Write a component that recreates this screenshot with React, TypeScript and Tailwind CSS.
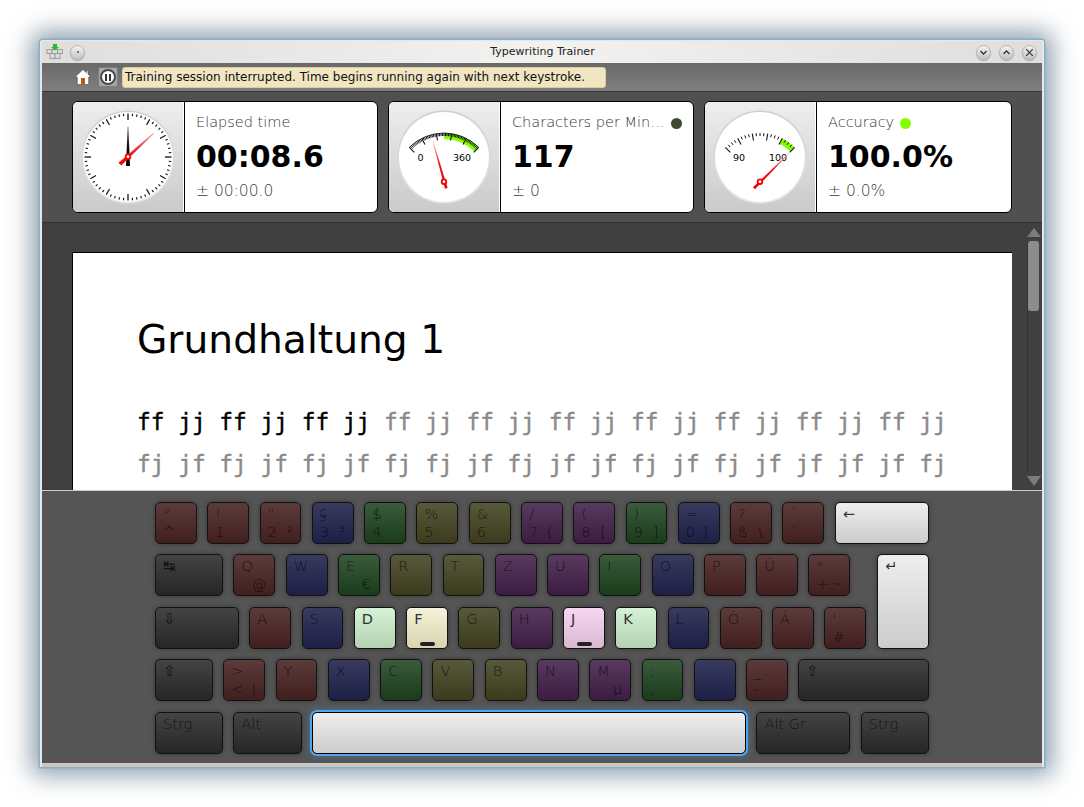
import React from "react";

type KeyDef = {
  top?: string;
  bottom?: string;
  right?: string;
  tone: string;
  width?: string;
  bump?: boolean;
};

const RED = "bg-gradient-to-b from-[#5c3b3b] to-[#421f1f]";
const BLUE = "bg-gradient-to-b from-[#383b5e] to-[#1d1f45]";
const GREEN = "bg-gradient-to-b from-[#3a5c3c] to-[#1a3c1a]";
const OLIVE = "bg-gradient-to-b from-[#58583b] to-[#3c3c1c]";
const PURPLE = "bg-gradient-to-b from-[#583b5e] to-[#3c1c42]";
const DARK = "bg-gradient-to-b from-[#444444] to-[#262626]";
const WHITE = "bg-gradient-to-b from-[#eeeeee] to-[#cccccc] !text-[#333333] !font-normal";
const HL_GREEN = "bg-gradient-to-b from-[#d6f2d6] to-[#b4d2b0] !text-[#333333] !font-normal";
const HL_YELLOW = "bg-gradient-to-b from-[#f4f2da] to-[#d8d4ae] !text-[#333333] !font-normal";
const HL_PURPLE = "bg-gradient-to-b from-[#f6d6f2] to-[#dab8d4] !text-[#333333] !font-normal";

const row1: KeyDef[] = [
  { top: "°", bottom: "^", tone: RED },
  { top: "!", bottom: "1", tone: RED },
  { top: '"', bottom: "2", right: "²", tone: RED },
  { top: "§", bottom: "3", right: "³", tone: BLUE },
  { top: "$", bottom: "4", tone: GREEN },
  { top: "%", bottom: "5", tone: OLIVE },
  { top: "&", bottom: "6", tone: OLIVE },
  { top: "/", bottom: "7", right: "{", tone: PURPLE },
  { top: "(", bottom: "8", right: "[", tone: PURPLE },
  { top: ")", bottom: "9", right: "]", tone: GREEN },
  { top: "=", bottom: "0", right: "}", tone: BLUE },
  { top: "?", bottom: "ß", right: "\\", tone: RED },
  { top: "`", bottom: "´", tone: RED },
  { top: "←", tone: WHITE, width: "w-[94px]" },
];

const row2: KeyDef[] = [
  { top: "↹", tone: DARK, width: "w-[68px]" },
  { top: "Q", right: "@", tone: RED },
  { top: "W", tone: BLUE },
  { top: "E", right: "€", tone: GREEN },
  { top: "R", tone: OLIVE },
  { top: "T", tone: OLIVE },
  { top: "Z", tone: PURPLE },
  { top: "U", tone: PURPLE },
  { top: "I", tone: GREEN },
  { top: "O", tone: BLUE },
  { top: "P", tone: RED },
  { top: "Ü", tone: RED },
  { top: "*", bottom: "+", right: "~", tone: RED },
];

const row3: KeyDef[] = [
  { top: "⇩", tone: DARK, width: "w-[83.9px]" },
  { top: "A", tone: RED },
  { top: "S", tone: BLUE },
  { top: "D", tone: HL_GREEN },
  { top: "F", tone: HL_YELLOW, bump: true },
  { top: "G", tone: OLIVE },
  { top: "H", tone: PURPLE },
  { top: "J", tone: HL_PURPLE, bump: true },
  { top: "K", tone: HL_GREEN },
  { top: "L", tone: BLUE },
  { top: "Ö", tone: RED },
  { top: "Ä", tone: RED },
  { top: "'", bottom: "#", tone: RED },
];

const row4: KeyDef[] = [
  { top: "⇧", tone: DARK, width: "w-[57.9px]" },
  { top: ">", bottom: "<", right: "|", tone: RED },
  { top: "Y", tone: RED },
  { top: "X", tone: BLUE },
  { top: "C", tone: GREEN },
  { top: "V", tone: OLIVE },
  { top: "B", tone: OLIVE },
  { top: "N", tone: PURPLE },
  { top: "M", right: "µ", tone: PURPLE },
  { top: ";", bottom: ",", tone: GREEN },
  { top: ":", bottom: ".", tone: BLUE },
  { top: "_", bottom: "-", tone: RED },
  { top: "⇧", tone: DARK, width: "w-[130.4px]" },
];

const Key = ({ top, bottom, right, tone, width = "w-[41.9px]", bump }: KeyDef) => (
  <div
    className={`relative ${width} h-[42px] shrink-0 rounded-[5px] border border-[#111111] pl-[7px] pr-[8px] pt-[2px] text-[14.5px] font-extralight leading-[19px] text-black/70 shadow-[0_0_5px_rgba(0,0,0,0.35)] ${tone}`}
  >
    <div className="h-[18px]">{top}</div>
    <div className="flex justify-between">
      <span>{bottom}</span>
      <span>{right}</span>
    </div>
    {bump && (
      <div className="absolute bottom-[2px] left-[13px] h-[4px] w-[15px] rounded-full bg-[#222222]" />
    )}
  </div>
);

const KeyRow = ({ keys }: { keys: KeyDef[] }) => (
  <div className="flex gap-[10.4px]">
    {keys.map((k, i) => (
      <Key key={i} {...k} />
    ))}
  </div>
);

const polar = (cx: number, cy: number, r: number, deg: number) => {
  const a = (deg * Math.PI) / 180;
  return { x: cx + r * Math.sin(a), y: cy - r * Math.cos(a) };
};

const Disc = ({ id }: { id: string }) => (
  <>
    <defs>
      <linearGradient id={id} x1="0" y1="0" x2="0" y2="1">
        <stop offset="0" stopColor="#cfcfcf" />
        <stop offset="1" stopColor="#e4e4e4" />
      </linearGradient>
    </defs>
    <circle cx="55" cy="55" r="46.5" fill={`url(#${id})`} />
    <circle cx="55" cy="55" r="45" fill="#ffffff" />
  </>
);

const Pivot = ({ x, y }: { x: number; y: number }) => (
  <>
    <circle cx={x} cy={y} r="3.2" fill="#f00000" />
    <circle cx={x} cy={y} r="1.4" fill="#ffffff" />
  </>
);

const ClockFace = () => (
  <svg width="110" height="110" viewBox="0 0 110 110">
    <defs>
      <linearGradient id="blackHand" x1="0" y1="0" x2="0" y2="1">
        <stop offset="0" stopColor="#777777" />
        <stop offset="0.5" stopColor="#111111" />
        <stop offset="1" stopColor="#000000" />
      </linearGradient>
      <linearGradient id="redHand" x1="47" y1="62" x2="81" y2="31" gradientUnits="userSpaceOnUse">
        <stop offset="0" stopColor="#f00000" />
        <stop offset="0.5" stopColor="#e83030" />
        <stop offset="1" stopColor="#f4b0b0" />
      </linearGradient>
    </defs>
    <Disc id="clockRing" />
    {Array.from({ length: 60 }).map((_, i) => {
      const major = i % 5 === 0;
      const quarter = i % 15 === 0;
      const a = polar(55, 55, 43.5, i * 6);
      const b = polar(55, 55, major ? 37 : 41, i * 6);
      return (
        <line
          key={i}
          x1={a.x}
          y1={a.y}
          x2={b.x}
          y2={b.y}
          stroke={quarter ? "#666666" : "#111111"}
          strokeWidth={quarter ? 2 : major ? 1.2 : 1.1}
        />
      );
    })}
    <polygon points="54.6,24.5 55.4,24.5 57,64 53,64" fill="url(#blackHand)" />
    <polygon points="45.6,60.8 48.2,63.4 81,31.8 80.4,30.8" fill="url(#redHand)" />
    <Pivot x={55} y={54.7} />
  </svg>
);

const Gauge = ({
  id,
  green,
  minors,
  low,
  lowX,
  high,
  tip,
  tail,
}: {
  id: string;
  green: number;
  minors: number;
  low: string;
  lowX: number;
  high: string;
  tip: [number, number];
  tail: [number, number];
}) => {
  const cx = 55;
  const cy = 80;
  const r = 49;
  const g1 = polar(cx, cy, r - 3, green);
  const g2 = polar(cx, cy, r - 3, 45);
  const total = 5 * minors;
  const arcA = polar(cx, cy, r, -45);
  const arcB = polar(cx, cy, r, 45);
  // tapered needle: wide at the tail, a hair at the tip
  const dx = tip[0] - tail[0];
  const dy = tip[1] - tail[1];
  const len = Math.hypot(dx, dy);
  const nx = -dy / len;
  const ny = dx / len;
  const needle = [
    [tail[0] + nx * 1.4, tail[1] + ny * 1.4],
    [tail[0] - nx * 1.4, tail[1] - ny * 1.4],
    [tip[0] - nx * 0.3, tip[1] - ny * 0.3],
    [tip[0] + nx * 0.3, tip[1] + ny * 0.3],
  ]
    .map((p) => p.join(","))
    .join(" ");
  return (
    <svg width="110" height="110" viewBox="0 0 110 110">
      <defs>
        <linearGradient id={`${id}-n`} x1={tail[0]} y1={tail[1]} x2={tip[0]} y2={tip[1]} gradientUnits="userSpaceOnUse">
          <stop offset="0" stopColor="#f00000" />
          <stop offset="0.55" stopColor="#ee1010" />
          <stop offset="1" stopColor="#f6c0c0" />
        </linearGradient>
      </defs>
      <Disc id={id} />
      <path d={`M${g1.x} ${g1.y} A${r - 3} ${r - 3} 0 0 1 ${g2.x} ${g2.y}`} fill="none" stroke="#84ff00" strokeWidth="6" />
      {minors > 4 && (
        <path d={`M${arcA.x} ${arcA.y} A${r} ${r} 0 0 1 ${arcB.x} ${arcB.y}`} fill="none" stroke="#222222" strokeWidth="0.8" />
      )}
      {Array.from({ length: total + 1 }).map((_, i) => {
        const deg = -45 + (90 * i) / total;
        const major = i % minors === 0;
        const a = polar(cx, cy, r, deg);
        const b = polar(cx, cy, major ? r - 7 : r - 3, deg);
        return <line key={i} x1={a.x} y1={a.y} x2={b.x} y2={b.y} stroke="#111111" strokeWidth={major ? 1.1 : 1} />;
      })}
      <text x={lowX} y="58.5" textAnchor="middle" fontSize="9.5" fill="#000000">{low}</text>
      <text x="73" y="58.5" textAnchor="middle" fontSize="9.5" fill="#000000">{high}</text>
      <polygon points={needle} fill={`url(#${id}-n)`} />
      <Pivot x={55} y={79.7} />
    </svg>
  );
};

const StatCard = ({
  face,
  title,
  dot,
  value,
  sub,
  size,
}: {
  face: React.ReactNode;
  title: string;
  dot?: string;
  value: string;
  sub: string;
  size: string;
}) => (
  <div className={`flex h-[112px] ${size} overflow-hidden rounded-[6px] border border-black bg-white`}>
    <div className="h-full w-[111px] shrink-0 border-r border-white bg-gradient-to-b from-[#eeeeee] to-[#cacaca]">
      {face}
    </div>
    <div className="w-px bg-black" />
    <div className="flex min-w-0 flex-1 flex-col pl-[11px] pt-[10px]">
      <div className="flex h-[22px] items-center gap-[6px] text-[14.5px] font-extralight text-[#333333]">
        <span className="whitespace-nowrap">{title}</span>
        {dot && <span className={`h-[11px] w-[11px] rounded-full ${dot}`} />}
      </div>
      <div className="mt-[1px] h-[44px] text-[30px] font-bold leading-[44px] text-black">{value}</div>
      <div className="mt-[1px] text-[15.5px] font-extralight leading-[22px] text-[#3c3c3c]">{sub}</div>
    </div>
  </div>
);

const WinButton = ({ children }: { children: React.ReactNode }) => (
  <div className="flex h-[15px] w-[15px] items-center justify-center rounded-full border border-[#b4b4b2] bg-gradient-to-b from-[#f2f2f0] to-[#c4c4c2] shadow-[0_1px_1px_rgba(0,0,0,0.25)]">
    {children}
  </div>
);

const line1 = "ff jj ff jj ff jj";
const line1Rest = "ff jj ff jj ff jj ff jj ff jj ff jj ff jj";
const line2 = "fj jf fj jf fj jf fj fj jf fj jf jf fj jf fj jf jf jf jf fj";

export default function App() {
  return (
    <div className="h-[807px] w-[1084px] overflow-hidden bg-white pl-[40px] pt-[40px] font-['DejaVu_Sans',sans-serif]">
      <div className="flex h-[727px] w-[1004px] flex-col rounded-t-[3px] border-x-2 border-t border-[#e8e7e5] shadow-[0_0_0_1.5px_#82b2cc,0_0_24px_8px_rgba(60,90,115,0.6)]">
        {/* Title bar */}
        <div className="flex h-[22px] shrink-0 items-center bg-gradient-to-r from-[#dfdedc] via-[#f2f2f0] to-[#dfdedc] pl-[4px] pr-[5px]">
          <svg width="18" height="18" viewBox="0 0 18 18">
            <g fill="#dcdcdc" stroke="#8f8f8f" strokeWidth="0.8">
              <rect x="1" y="6.5" width="5" height="4" />
              <rect x="6" y="6.5" width="5.5" height="4" />
              <rect x="11.5" y="6.5" width="5" height="4" />
              <rect x="4" y="10.5" width="5" height="5" />
              <rect x="9" y="10.5" width="5" height="5" />
            </g>
            <path d="M7 1h4v3h2l-4 3.5L5 4h2z" fill="#33b534" />
          </svg>
          <div className="ml-[6px]">
            <WinButton>
              <span className="h-[2px] w-[2px] rounded-full bg-[#555555]" />
            </WinButton>
          </div>
          <div className="flex-1 pl-[24px] text-center text-[11px] text-[#222222]">Typewriting Trainer</div>
          <div className="flex gap-[8px]">
            <WinButton>
              <svg width="9" height="9" viewBox="0 0 9 9"><path d="M1.5 3 4.5 6 7.5 3" fill="none" stroke="#333333" strokeWidth="1.3" /></svg>
            </WinButton>
            <WinButton>
              <svg width="9" height="9" viewBox="0 0 9 9"><path d="M1.5 6 4.5 3 7.5 6" fill="none" stroke="#333333" strokeWidth="1.3" /></svg>
            </WinButton>
            <WinButton>
              <svg width="9" height="9" viewBox="0 0 9 9"><path d="M1.2 1.2 7.8 7.8M7.8 1.2 1.2 7.8" fill="none" stroke="#333333" strokeWidth="1.2" /></svg>
            </WinButton>
          </div>
        </div>

        {/* Toolbar */}
        <div className="flex h-[28px] shrink-0 items-center bg-gradient-to-b from-[#696969] to-[#808080] pl-[32px]">
          <svg width="18" height="18" viewBox="0 0 18 18">
            <path d="M9 1.5 1 9h2.3v7.5h11.4V9H17l-3-2.8V2.5h-1.6v2.2z" fill="#ffffff" stroke="#333333" strokeWidth="0.5" />
            <rect x="7" y="10" width="4" height="6.5" fill="#b85a10" />
          </svg>
          <div className="ml-[6px] flex h-[20px] w-[20px] items-center justify-center rounded-[2px] border border-[#7a7a7a] bg-[#a8a8a8]">
            <div className="flex h-[16px] w-[16px] items-center justify-center gap-[2px] rounded-full border-2 border-[#4a4a4a] bg-white">
              <span className="h-[7px] w-[2px] bg-[#333333]" />
              <span className="h-[7px] w-[2px] bg-[#333333]" />
            </div>
          </div>
          <div className="ml-[4px] flex h-[21px] w-[484px] items-center rounded-[3px] border border-[#d9cd9d] bg-[#f0e6c2] pl-[2px] text-[12px] whitespace-nowrap text-[#111111]">
            Training session interrupted. Time begins running again with next keystroke.
          </div>
        </div>
        <div className="h-px shrink-0 bg-[#363636]" />

        {/* Stats */}
        <div className="flex h-[130px] shrink-0 gap-[10px] bg-[#505050] pl-[30px] pr-[30px] pt-[9px]">
          <StatCard size="w-[306px]" face={<ClockFace />} title="Elapsed time" value="00:08.6" sub="± 00:00.0" />
          <StatCard
            size="w-[306px]"
            face={<Gauge id="cpm" green={0} minors={10} low="0" lowX={31.5} high="360" tip={[44, 39.7]} tail={[57.3, 86.3]} />}
            title="Characters per Min…"
            dot="bg-[#404a30]"
            value="117"
            sub="± 0"
          />
          <StatCard
            size="flex-1"
            face={<Gauge id="acc" green={27} minors={4} low="90" lowX={34} high="100" tip={[84, 51.3]} tail={[49, 86.3]} />}
            title="Accuracy"
            dot="bg-[#84ff00]"
            value="100.0%"
            sub="± 0.0%"
          />
        </div>
        <div className="h-px shrink-0 bg-[#333333]" />

        {/* Text page */}
        <div className="flex h-[267px] shrink-0 bg-[#404040]">
          <div className="h-full flex-1 overflow-hidden pl-[30px] pr-[15px] pt-[29px]">
            <div className="h-[300px] border-l border-t border-black bg-white pl-[64px] pt-[62px]">
              <h1 className="text-[39.2px] leading-[50px] text-black">Grundhaltung 1</h1>
              <div className="mt-[36px] font-['DejaVu_Sans_Mono',monospace] text-[22.8px] leading-[42px] whitespace-pre text-[#8a8a8a] [-webkit-text-stroke:0.4px]">
                <div>
                  <span className="text-black">{line1}</span> {line1Rest}
                </div>
                <div>{line2}</div>
              </div>
            </div>
          </div>
          <div className="flex w-[15px] shrink-0 flex-col items-center pr-[2px] pt-[5px]">
            <svg width="14" height="10" viewBox="0 0 14 10"><path d="M7 0 14 9H0z" fill="#7c7c7c" /></svg>
            <div className="mt-[3px] flex w-full flex-1 flex-col border-l border-[#333333] pr-[1px]">
              <div className="h-[70px] w-full rounded-[3px] bg-[#8c8c8c]" />
            </div>
            <svg className="mb-[4px] mt-[3px]" width="14" height="11" viewBox="0 0 14 11"><path d="M7 11 14 1H0z" fill="#7c7c7c" /></svg>
          </div>
        </div>
        <div className="h-px shrink-0 bg-[#cccccc]" />

        {/* Keyboard */}
        <div className="h-[272px] shrink-0 bg-[#555555] pt-[11px]">
          <div className="mx-auto flex w-[774px] flex-col gap-[10.3px]">
            <KeyRow keys={row1} />
            <div className="flex justify-between">
              <div className="flex flex-col gap-[10.9px]">
                <KeyRow keys={row2} />
                <KeyRow keys={row3} />
              </div>
              <Key top="↵" tone={WHITE} width="w-[51.6px] !h-[94.9px]" />
            </div>
            <KeyRow keys={row4} />
            <div className="flex gap-[10.4px]">
              <Key top="Strg" tone={DARK} width="w-[68px]" />
              <Key top="Alt" tone={DARK} width="w-[68.3px]" />
              <div className="h-[42px] w-[434px] shrink-0 rounded-[5px] border border-black bg-gradient-to-b from-[#eeeeee] to-[#cccccc] shadow-[0_0_0_2px_#52a5ec,0_0_6px_3px_rgba(60,140,220,0.35)]" />
              <Key top="Alt Gr" tone={DARK} width="w-[94px]" />
              <Key top="Strg" tone={DARK} width="w-[68px]" />
            </div>
          </div>
        </div>
        <div className="h-[4px] shrink-0 bg-[#cfc5bf]" />
      </div>
    </div>
  );
}
